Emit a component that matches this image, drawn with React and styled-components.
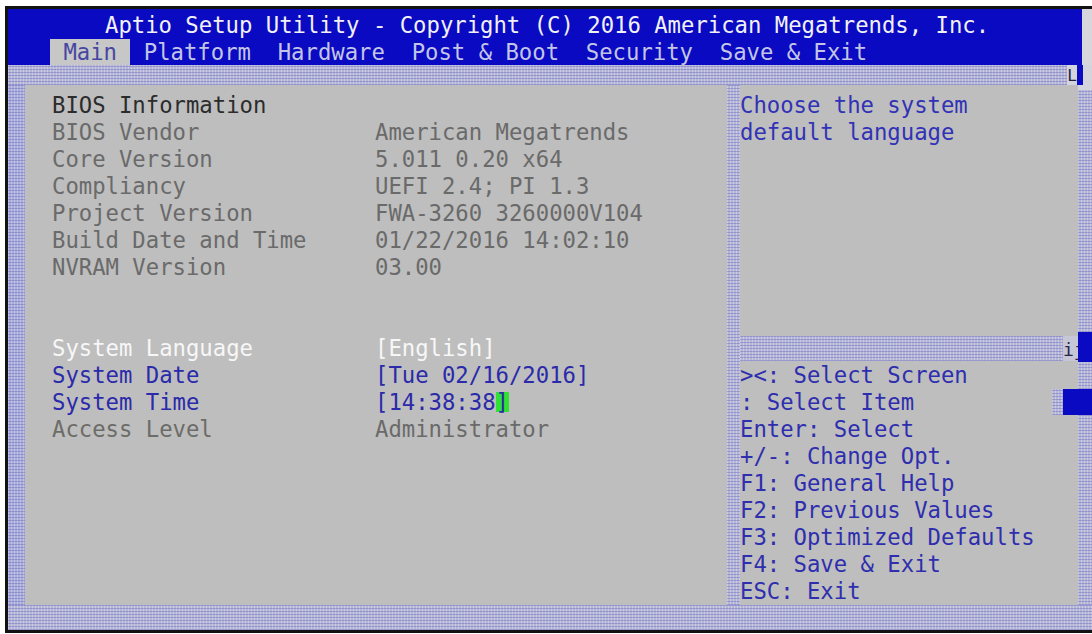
import React from "react";
import styled, { createGlobalStyle, css } from "styled-components";

const Global = createGlobalStyle`
  html, body { margin: 0; padding: 0; background: #ffffff; }
  body { font-family: "DejaVu Sans Mono", "Liberation Mono", monospace; }
`;

const shade = css`
  background-color: #b5b5d5;
  background-image:
    repeating-linear-gradient(0deg, rgba(108, 108, 196, 0.45) 0 1px, transparent 1px 3px),
    repeating-linear-gradient(90deg, rgba(236, 236, 246, 0.4) 0 1px, transparent 1px 3px);
`;

const Screen = styled.div`
  box-sizing: border-box;
  margin: 6px 0 0 5px;
  width: 1087px;
  border-left: 3px solid #121212;
  border-top: 3px solid #121212;
  border-bottom: 3px solid #121212;
  font-family: "DejaVu Sans Mono", "Liberation Mono", monospace;
  font-size: 22.25px;
  line-height: 27px;
  display: flex;
  flex-direction: column;
  background: #bebebe;
`;

const Header = styled.header`
  box-sizing: border-box;
  height: 56px;
  padding-top: 3px;
  background: #0a0ac2;
  border-right: 10px solid #d6d6dc;
  display: flex;
  flex-direction: column;
`;

const Title = styled.div`
  height: 27px;
  padding-left: 97px;
  color: #f1f1f5;
  white-space: pre;
`;

const Tabs = styled.nav`
  display: flex;
  height: 26px;
  line-height: 26px;
  padding-left: 42px;
`;

const Tab = styled.span`
  padding: 0 1ch;
  white-space: pre;
  color: ${(p) => (p.$active ? "#4646a2" : "#c3c5e6")};
  background: ${(p) => (p.$active ? "#c7c7c7" : "transparent")};
`;

const TopRow = styled.div`
  display: flex;
  height: 20px;
`;

const Band = styled.div`
  ${shade};
  flex: 1;
`;

const Corner = styled.div`
  width: 25px;
  display: flex;
  background: #d4d4dc;
`;

const CornerGlyph = styled.span`
  width: 10px;
  font-size: 16px;
  line-height: 22px;
  color: #202040;
  text-align: center;
`;

const CornerBlock = styled.span`
  width: 6px;
  background: #0a0ac2;
`;

const Middle = styled.div`
  display: flex;
  height: 520px;
`;

const LeftStrip = styled.div`
  ${shade};
  width: 17px;
  background-color: #a9abd8;
`;

const MainPanel = styled.section`
  box-sizing: border-box;
  width: 702px;
  padding: 7px 0 0 27px;
  background: #bebebe;
`;

const Row = styled.div`
  display: grid;
  grid-template-columns: 323px 1fr;
  height: 27px;
  white-space: pre;
`;

const tones = {
  head: "#2c2c2c",
  dim: "#6a6a6a",
  sel: "#f7f7f7",
  link: "#2a2aaa",
  plain: "#6c6c68",
};

const Label = styled.span`
  color: ${(p) => tones[p.$tone]};
`;

const Value = styled.span`
  color: ${(p) => tones[p.$tone]};
`;

const Cursor = styled.span`
  display: inline-block;
  background: #30e032;
  line-height: 20px;
`;

const VDivider = styled.div`
  ${shade};
  width: 13px;
`;

const RightPanel = styled.section`
  width: 338px;
  display: flex;
  flex-direction: column;
  background: #bebebe;
`;

const HelpTop = styled.div`
  box-sizing: border-box;
  height: 251px;
  padding-top: 7px;
  color: #3232b6;
  white-space: pre;
`;

const HDivider = styled.div`
  display: flex;
  height: 25px;
`;

const DividerGlyph = styled.span`
  width: 15px;
  font-size: 18px;
  line-height: 28px;
  color: #262650;
  background: #c6c6d6;
  text-align: center;
`;

const HelpBottom = styled.div`
  position: relative;
  box-sizing: border-box;
  height: 244px;
  padding-top: 1px;
  color: #2e2eae;
  white-space: pre;
`;

const HelpLine = styled.div`
  height: 27px;
`;

const Thumb = styled.div`
  position: absolute;
  right: 0;
  top: 28px;
  width: 26px;
  height: 26px;
  display: flex;
`;

const ThumbShade = styled.span`
  ${shade};
  width: 11px;
`;

const ThumbBlock = styled.span`
  flex: 1;
  background: #0a0ac2;
`;

const RightBorder = styled.div`
  width: 14px;
  display: flex;
  flex-direction: column;
`;

const Segment = styled.div`
  height: ${(p) => p.$h}px;
  ${(p) =>
    p.$blue
      ? css`
          background: #0a0ac2;
        `
      : p.$light
      ? css`
          background: #d4d4dc;
        `
      : shade};
  flex: ${(p) => (p.$grow ? 1 : "none")};
`;

const BottomBand = styled.div`
  ${shade};
  height: 25px;
`;

const info = [
  ["BIOS Vendor", "American Megatrends"],
  ["Core Version", "5.011 0.20 x64"],
  ["Compliancy", "UEFI 2.4; PI 1.3"],
  ["Project Version", "FWA-3260 3260000V104"],
  ["Build Date and Time", "01/22/2016 14:02:10"],
  ["NVRAM Version", "03.00"],
];

const help = [
  "><: Select Screen",
  ": Select Item",
  "Enter: Select",
  "+/-: Change Opt.",
  "F1: General Help",
  "F2: Previous Values",
  "F3: Optimized Defaults",
  "F4: Save & Exit",
  "ESC: Exit",
];

const tabs = ["Main", "Platform", "Hardware", "Post & Boot", "Security", "Save & Exit"];

export default function App() {
  return (
    <>
      <Global />
      <Screen>
        <Header>
          <Title>Aptio Setup Utility - Copyright (C) 2016 American Megatrends, Inc.</Title>
          <Tabs>
            {tabs.map((t, i) => (
              <Tab key={t} $active={i === 0}>
                {t}
              </Tab>
            ))}
          </Tabs>
        </Header>
        <TopRow>
          <Band />
          <Corner>
            <CornerGlyph>L</CornerGlyph>
            <CornerBlock />
          </Corner>
        </TopRow>
        <Middle>
          <LeftStrip />
          <MainPanel>
            <Row>
              <Label $tone="head">BIOS Information</Label>
              <Value />
            </Row>
            {info.map(([l, v]) => (
              <Row key={l}>
                <Label $tone="dim">{l}</Label>
                <Value $tone="dim">{v}</Value>
              </Row>
            ))}
            <Row />
            <Row />
            <Row>
              <Label $tone="sel">System Language</Label>
              <Value $tone="sel">[English]</Value>
            </Row>
            <Row>
              <Label $tone="link">System Date</Label>
              <Value $tone="link">[Tue 02/16/2016]</Value>
            </Row>
            <Row>
              <Label $tone="link">System Time</Label>
              <Value $tone="link">
                [14:38:38<Cursor>]</Cursor>
              </Value>
            </Row>
            <Row>
              <Label $tone="plain">Access Level</Label>
              <Value $tone="dim">Administrator</Value>
            </Row>
          </MainPanel>
          <VDivider />
          <RightPanel>
            <HelpTop>
              <HelpLine>Choose the system</HelpLine>
              <HelpLine>default language</HelpLine>
            </HelpTop>
            <HDivider>
              <Band />
              <DividerGlyph>ij</DividerGlyph>
            </HDivider>
            <HelpBottom>
              {help.map((h) => (
                <HelpLine key={h}>{h}</HelpLine>
              ))}
              <Thumb>
                <ThumbShade />
                <ThumbBlock />
              </Thumb>
            </HelpBottom>
          </RightPanel>
          <RightBorder>
            <Segment $h={5} $light />
            <Segment $h={242} />
            <Segment $h={30} $blue />
            <Segment $h={27} />
            <Segment $h={26} $blue />
            <Segment $grow />
          </RightBorder>
        </Middle>
        <BottomBand />
      </Screen>
    </>
  );
}
